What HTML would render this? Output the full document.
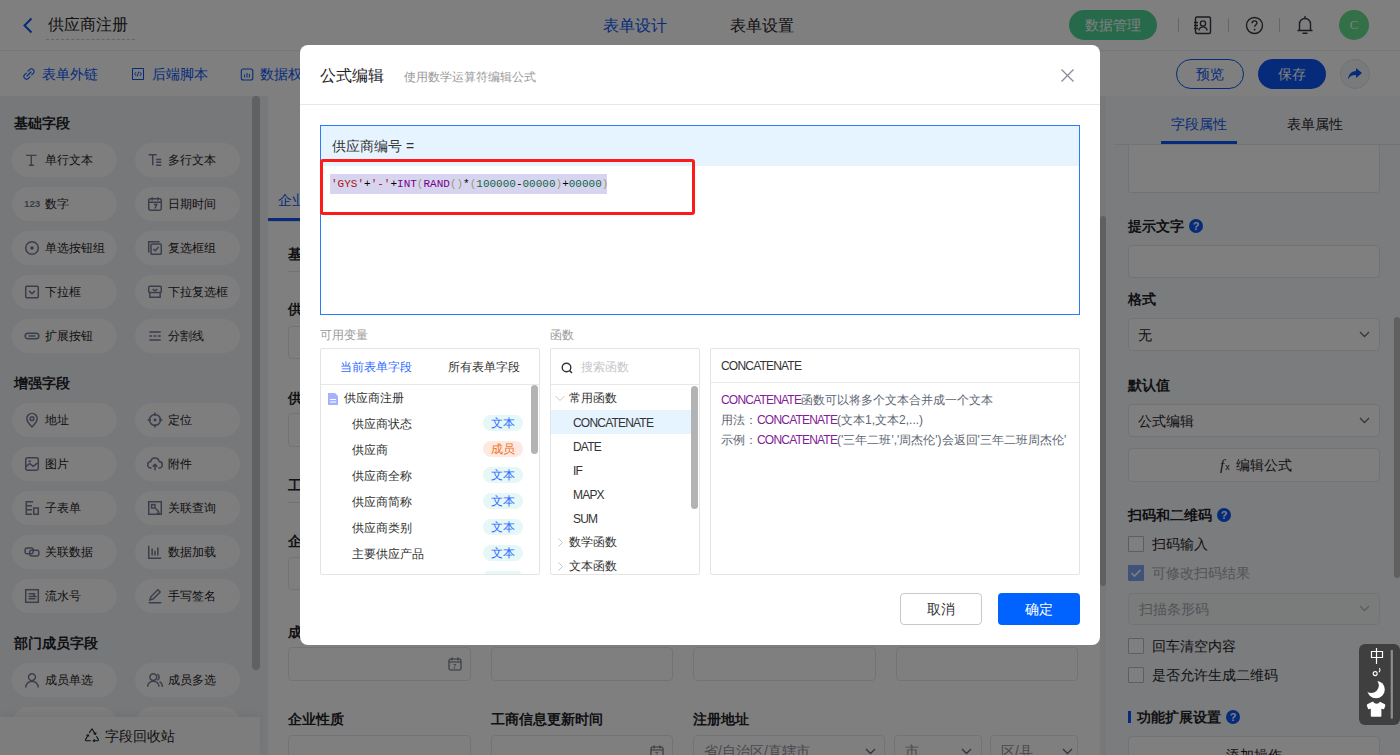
<!DOCTYPE html>
<html><head><meta charset="utf-8">
<style>
*{margin:0;padding:0;box-sizing:border-box}
html,body{width:1400px;height:755px;overflow:hidden;background:#fff;font-family:"Liberation Sans",sans-serif;color:#1f2329}
.a{position:absolute}
#hdr{left:0;top:0;width:1400px;height:51px;background:#fff;border-bottom:1px solid #ebedf0}
#tb{left:0;top:51px;width:1400px;height:45px;background:#fff}
#lp{left:0;top:96px;width:268px;height:659px;background:#eff1f5}
#cv{left:268px;top:96px;width:833px;height:659px;background:#fff}
#rp{left:1106px;top:96px;width:294px;height:659px;background:#f7f8fa}
#ov{left:0;top:0;width:1400px;height:755px;background:rgba(0,0,0,.5)}
#md{left:300px;top:45px;width:800px;height:600px;background:#fff;border-radius:8px}
.pill{position:absolute;width:105px;height:34px;border-radius:17px;background:#fcfcfd}
.pt{font-size:12px;line-height:18px;color:#1f2329}
.sh{font-size:14px;font-weight:bold;line-height:20px;color:#1f2329}
.lb{font-size:14px;font-weight:bold;line-height:20px;color:#1f2329;white-space:nowrap}
.ip{border:1px solid #e5e6eb;border-radius:4px;background:#fff}
.hq{position:absolute;width:14px;height:14px;border-radius:7px;background:#0a57f5;color:#fff;font-size:11px;font-weight:bold;line-height:14px;text-align:center}
.cm{font-family:"Liberation Mono",monospace;font-size:11px;line-height:20px;color:#000;white-space:pre}
.cm .s{color:#a11}.cm .k{color:#708}.cm .b{color:#997}.cm .n{color:#164}
.bx{border:1px solid #e4e4e4;border-radius:2px;background:#fff}
.tg{width:40px;height:16px;border-radius:8px;font-size:12px;line-height:16px;text-align:center}
.fn{font-size:12px;line-height:18px;color:#333;letter-spacing:-.8px}
.ds{font-size:12px;line-height:20px;color:#5e6673;white-space:nowrap}.ds .p{color:#7f2196;letter-spacing:-.8px}
#ime{left:1359px;top:644px;width:41px;height:81px;border-radius:6px;background:#3f3f3f}
</style></head><body>
<div id="hdr" class="a">
<svg class="a" style="left:22px;top:17px" width="12" height="17" viewBox="0 0 12 17"><path d="M9.5 1.5L2.5 8.5l7 7" fill="none" stroke="#0a57f5" stroke-width="2"/></svg>
<div class="a" style="left:48px;top:14px;font-size:16px;line-height:22px;color:#1f2329">供应商注册</div>
<div class="a" style="left:46px;top:39px;width:89px;border-top:1px dashed #c8cad0"></div>
<div class="a" style="left:603px;top:15px;font-size:16px;line-height:22px;color:#0a57f5">表单设计</div>
<div class="a" style="left:730px;top:15px;font-size:16px;line-height:22px;color:#1f2329">表单设置</div>
<div class="a" style="left:1069px;top:10px;width:88px;height:30px;border-radius:15px;background:#4cd397;color:#fff;font-size:14px;line-height:30px;text-align:center">数据管理</div>
<div class="a" style="left:1178px;top:18px;width:1px;height:14px;background:#c9cdd4"></div>
<div class="a" style="left:1228px;top:18px;width:1px;height:14px;background:#c9cdd4"></div>
<div class="a" style="left:1279px;top:18px;width:1px;height:14px;background:#c9cdd4"></div>
<svg class="a" style="left:1192px;top:15px" width="22" height="21" viewBox="0 0 22 21"><rect x="3.5" y="2" width="15" height="16.5" rx="1.5" fill="none" stroke="#33373e" stroke-width="1.4"/><path d="M2 7.5h4M2 10.5h4M2 13.5h4" stroke="#33373e" stroke-width="1.4"/><circle cx="11" cy="8.5" r="2.6" fill="none" stroke="#33373e" stroke-width="1.35"/><path d="M6.8 15.5c.6-2.4 2.2-3.6 4.2-3.6s3.6 1.2 4.2 3.6" fill="none" stroke="#33373e" stroke-width="1.35"/></svg>
<svg class="a" style="left:1245px;top:16px" width="19" height="19" viewBox="0 0 19 19"><circle cx="9.5" cy="9.5" r="8" fill="none" stroke="#33373e" stroke-width="1.35"/><path d="M7 7.3c0-1.5 1.1-2.5 2.5-2.5s2.5 1 2.5 2.3c0 1.6-2.3 1.8-2.3 3.6" fill="none" stroke="#33373e" stroke-width="1.35"/><circle cx="9.6" cy="13.6" r=".95" fill="#33373e"/></svg>
<svg class="a" style="left:1296px;top:15px" width="18" height="20" viewBox="0 0 18 20"><path d="M9 1.5v1.5M3.5 15.5V9a5.5 5.5 0 0 1 11 0v6.5M2 15.5h14M7 18.3h4" fill="none" stroke="#33373e" stroke-width="1.4" stroke-linecap="round"/></svg>
<div class="a" style="left:1339px;top:10px;width:30px;height:30px;border-radius:15px;background:#66e08f;color:#fff;font-family:'Liberation Serif',serif;font-size:12.5px;line-height:31px;text-align:center">C</div>
</div>
<div id="tb" class="a">
<svg class="a" style="left:22px;top:16px" width="14" height="14" viewBox="0 0 14 14"><path d="M6 4.2l1.6-1.6a2.6 2.6 0 0 1 3.7 3.7L9.7 7.9M8 9.8l-1.6 1.6a2.6 2.6 0 0 1-3.7-3.7L4.3 6.1M5 9l4-4" fill="none" stroke="#0a57f5" stroke-width="1.1" stroke-linecap="round"/></svg>
<div class="a" style="left:42px;top:13px;font-size:14px;line-height:20px;color:#0a57f5">表单外链</div>
<svg class="a" style="left:131px;top:16px" width="14" height="14" viewBox="0 0 14 14"><rect x="1.5" y="1.5" width="11" height="11" rx=".5" fill="none" stroke="#0a57f5" stroke-width="1.05"/><path d="M5.2 5L3.6 7l1.6 2M8.8 5l1.6 2-1.6 2M7.8 4.6L6.2 9.4" fill="none" stroke="#0a57f5" stroke-width=".9"/></svg>
<div class="a" style="left:152px;top:13px;font-size:14px;line-height:20px;color:#0a57f5">后端脚本</div>
<svg class="a" style="left:240px;top:17px" width="14" height="14" viewBox="0 0 14 14"><rect x="1.3" y="1" width="11.5" height="11" rx="2" fill="none" stroke="#0a57f5" stroke-width="1.1"/><path d="M4.6 9.5V6.5M7 9.5V5M9.4 9.5V6" stroke="#0a57f5" stroke-width="1"/></svg>
<div class="a" style="left:260px;top:13px;font-size:14px;line-height:20px;color:#0a57f5">数据权限</div>
<div class="a" style="left:1176px;top:8px;width:68px;height:30px;border-radius:15px;border:1px solid #0a57f5;color:#0a57f5;font-size:14px;line-height:28px;text-align:center">预览</div>
<div class="a" style="left:1258px;top:8px;width:68px;height:30px;border-radius:15px;background:#0a57f5;color:#fff;font-size:14px;line-height:30px;text-align:center">保存</div>
<div class="a" style="left:1340px;top:8px;width:30px;height:30px;border-radius:15px;border:1px solid #dfe3ea;background:#f3f5f9"></div>
<svg class="a" style="left:1347px;top:16px" width="16" height="14" viewBox="0 0 16 14"><path d="M9 1l6 5-6 5V8C5 8 2.5 9.3 1 12.5 1.5 7.5 4 4.5 9 4z" fill="#0a57f5"/></svg>
</div>
<div id="lp" class="a"><div class="a sh" style="left:14px;top:17px">基础字段</div><div class="pill" style="left:12px;top:47px"></div><svg class="a" style="left:24px;top:56px" width="16" height="16" viewBox="0 0 14 14"><path d="M1.8 3h9.2M6.4 3v8.6M4.3 11.6h4.4" stroke="#737d95" fill="none" stroke-width="1.2"/></svg><div class="a pt" style="left:45px;top:55px">单行文本</div><div class="pill" style="left:135px;top:47px"></div><svg class="a" style="left:147px;top:56px" width="16" height="16" viewBox="0 0 14 14"><path d="M1.5 2.5h7M5 2.5v9M8 6.5h4.5M8 9h4.5M8 11.5h4.5" stroke="#737d95" fill="none" stroke-width="1.3"/></svg><div class="a pt" style="left:168px;top:55px">多行文本</div><div class="pill" style="left:12px;top:91px"></div><svg class="a" style="left:24px;top:100px" width="16" height="16" viewBox="0 0 14 14"><text x="0" y="9.6" font-size="8.5" font-weight="bold" fill="#737d95" font-family="Liberation Sans">123</text></svg><div class="a pt" style="left:45px;top:99px">数字</div><div class="pill" style="left:135px;top:91px"></div><svg class="a" style="left:147px;top:100px" width="16" height="16" viewBox="0 0 14 14"><rect x="1.5" y="2.5" width="11" height="10" rx="1.5" stroke="#737d95" fill="none" stroke-width="1.3"/><path d="M4.5 1v3M9.5 1v3M1.5 5.5h11M6 7.5h2.5l-1.5 3.5" stroke="#737d95" fill="none" stroke-width="1.3"/></svg><div class="a pt" style="left:168px;top:99px">日期时间</div><div class="pill" style="left:12px;top:135px"></div><svg class="a" style="left:24px;top:144px" width="16" height="16" viewBox="0 0 14 14"><circle cx="7" cy="7" r="5.5" stroke="#737d95" fill="none" stroke-width="1.3"/><circle cx="7" cy="7" r="1.6" fill="#737d95"/></svg><div class="a pt" style="left:45px;top:143px">单选按钮组</div><div class="pill" style="left:135px;top:135px"></div><svg class="a" style="left:147px;top:144px" width="16" height="16" viewBox="0 0 14 14"><path d="M1.5 11V1.5H11" stroke="#737d95" fill="none" stroke-width="1.3"/><rect x="3.5" y="3.5" width="9" height="9" rx="1" stroke="#737d95" fill="none" stroke-width="1.3"/><path d="M5.6 7.8l1.6 1.6 3-3.3" stroke="#737d95" fill="none" stroke-width="1.3"/></svg><div class="a pt" style="left:168px;top:143px">复选框组</div><div class="pill" style="left:12px;top:179px"></div><svg class="a" style="left:24px;top:188px" width="16" height="16" viewBox="0 0 14 14"><rect x="1.5" y="2" width="11" height="10" rx="1" stroke="#737d95" fill="none" stroke-width="1.3"/><path d="M4.5 6l2.5 2.5 2.5-2.5" stroke="#737d95" fill="none" stroke-width="1.3"/></svg><div class="a pt" style="left:45px;top:187px">下拉框</div><div class="pill" style="left:135px;top:179px"></div><svg class="a" style="left:147px;top:188px" width="16" height="16" viewBox="0 0 14 14"><rect x="1.5" y="2" width="11" height="5.5" rx="1" stroke="#737d95" fill="none" stroke-width="1.3"/><path d="M2.5 7.5v4h9v-4M5 4.5l2 1.5 2-1.5" stroke="#737d95" fill="none" stroke-width="1.3"/></svg><div class="a pt" style="left:168px;top:187px">下拉复选框</div><div class="pill" style="left:12px;top:223px"></div><svg class="a" style="left:24px;top:232px" width="16" height="16" viewBox="0 0 14 14"><rect x="1" y="4.5" width="12" height="5" rx="2.5" stroke="#737d95" fill="none" stroke-width="1.3"/><path d="M4 7h6" stroke="#737d95" fill="none" stroke-width="1.3"/></svg><div class="a pt" style="left:45px;top:231px">扩展按钮</div><div class="pill" style="left:135px;top:223px"></div><svg class="a" style="left:147px;top:232px" width="16" height="16" viewBox="0 0 14 14"><path d="M2 3.5h10M2 7h2.5M5.8 7h2.5M9.5 7h2.5M2 10.5h10" stroke="#737d95" fill="none" stroke-width="1.3"/></svg><div class="a pt" style="left:168px;top:231px">分割线</div><div class="a sh" style="left:14px;top:277px">增强字段</div><div class="pill" style="left:12px;top:307px"></div><svg class="a" style="left:24px;top:316px" width="16" height="16" viewBox="0 0 14 14"><path d="M7 13s-4.5-4.2-4.5-7.3a4.5 4.5 0 0 1 9 0C11.5 8.8 7 13 7 13z" stroke="#737d95" fill="none" stroke-width="1.3"/><circle cx="7" cy="5.8" r="1.6" stroke="#737d95" fill="none" stroke-width="1.3"/></svg><div class="a pt" style="left:45px;top:315px">地址</div><div class="pill" style="left:135px;top:307px"></div><svg class="a" style="left:147px;top:316px" width="16" height="16" viewBox="0 0 14 14"><circle cx="7" cy="7" r="4.8" stroke="#737d95" fill="none" stroke-width="1.3"/><circle cx="7" cy="7" r="1.3" fill="#737d95"/><path d="M7 .5v3M7 10.5v3M.5 7h3M10.5 7h3" stroke="#737d95" fill="none" stroke-width="1.3"/></svg><div class="a pt" style="left:168px;top:315px">定位</div><div class="pill" style="left:12px;top:351px"></div><svg class="a" style="left:24px;top:360px" width="16" height="16" viewBox="0 0 14 14"><rect x="1.5" y="1.5" width="11" height="11" rx="1.5" stroke="#737d95" fill="none" stroke-width="1.3"/><path d="M1.5 9.5l3.5-3 3 2.5 4-3M4 4.5h2" stroke="#737d95" fill="none" stroke-width="1.3"/></svg><div class="a pt" style="left:45px;top:359px">图片</div><div class="pill" style="left:135px;top:351px"></div><svg class="a" style="left:147px;top:360px" width="16" height="16" viewBox="0 0 14 14"><path d="M4 10.5H3.5a2.8 2.8 0 0 1-.3-5.6 3.8 3.8 0 0 1 7.5 0 2.8 2.8 0 0 1-.2 5.6H10M7 12.5V7.5M5 9.3l2-2 2 2" stroke="#737d95" fill="none" stroke-width="1.3"/></svg><div class="a pt" style="left:168px;top:359px">附件</div><div class="pill" style="left:12px;top:395px"></div><svg class="a" style="left:24px;top:404px" width="16" height="16" viewBox="0 0 14 14"><path d="M8 1.5H2v11h5M2 5h5M2 8.5h5" stroke="#737d95" fill="none" stroke-width="1.3"/><rect x="8.5" y="7" width="4" height="5.5" stroke="#737d95" fill="none" stroke-width="1.3"/></svg><div class="a pt" style="left:45px;top:403px">子表单</div><div class="pill" style="left:135px;top:395px"></div><svg class="a" style="left:147px;top:404px" width="16" height="16" viewBox="0 0 14 14"><rect x="1.5" y="1.5" width="11" height="11" stroke="#737d95" fill="none" stroke-width="1.3"/><rect x="4" y="4" width="3" height="3" stroke="#737d95" fill="none" stroke-width="1.3"/><path d="M7.5 7.5l3 3M8.5 11.5h3" stroke="#737d95" fill="none" stroke-width="1.3"/></svg><div class="a pt" style="left:168px;top:403px">关联查询</div><div class="pill" style="left:12px;top:439px"></div><svg class="a" style="left:24px;top:448px" width="16" height="16" viewBox="0 0 14 14"><rect x="1" y="3.5" width="7" height="5" rx="1.5" stroke="#737d95" fill="none" stroke-width="1.3"/><rect x="5" y="5.5" width="8" height="5" rx="1.5" stroke="#737d95" fill="none" stroke-width="1.3"/></svg><div class="a pt" style="left:45px;top:447px">关联数据</div><div class="pill" style="left:135px;top:439px"></div><svg class="a" style="left:147px;top:448px" width="16" height="16" viewBox="0 0 14 14"><path d="M1.5 1.5v11h11M4.5 4v6M7 6v4M9.5 3v7" stroke="#737d95" fill="none" stroke-width="1.3"/></svg><div class="a pt" style="left:168px;top:447px">数据加载</div><div class="pill" style="left:12px;top:483px"></div><svg class="a" style="left:24px;top:492px" width="16" height="16" viewBox="0 0 14 14"><rect x="1.5" y="1.5" width="11" height="11" stroke="#737d95" fill="none" stroke-width="1.3"/><path d="M4 5h6M4 7.5h6l-2-1.5M10 9.5H4" stroke="#737d95" fill="none" stroke-width="1.3"/></svg><div class="a pt" style="left:45px;top:491px">流水号</div><div class="pill" style="left:135px;top:483px"></div><svg class="a" style="left:147px;top:492px" width="16" height="16" viewBox="0 0 14 14"><path d="M2.5 10.5l1-3 6-6 2 2-6 6zM1.5 13h11" stroke="#737d95" fill="none" stroke-width="1.3"/></svg><div class="a pt" style="left:168px;top:491px">手写签名</div><div class="a sh" style="left:14px;top:537px">部门成员字段</div><div class="pill" style="left:12px;top:567px"></div><svg class="a" style="left:24px;top:576px" width="16" height="16" viewBox="0 0 14 14"><circle cx="7" cy="4.5" r="3" stroke="#737d95" fill="none" stroke-width="1.3"/><path d="M1.5 13.5a5.5 5.5 0 0 1 11 0" stroke="#737d95" fill="none" stroke-width="1.3"/></svg><div class="a pt" style="left:45px;top:575px">成员单选</div><div class="pill" style="left:135px;top:567px"></div><svg class="a" style="left:147px;top:576px" width="16" height="16" viewBox="0 0 14 14"><circle cx="5.5" cy="4.5" r="3" stroke="#737d95" fill="none" stroke-width="1.3"/><path d="M.5 13a5 5 0 0 1 10 0M9 1.8a3 3 0 0 1 0 5.4M11 8.5a5 5 0 0 1 2.5 4.5" stroke="#737d95" fill="none" stroke-width="1.3"/></svg><div class="a pt" style="left:168px;top:575px">成员多选</div><div class="pill" style="left:12px;top:611px"></div><div class="pill" style="left:135px;top:611px"></div><div class="a" style="left:252px;top:0;width:8px;height:574px;border-radius:4px;background:#bfc2c7"></div><div class="a" style="left:0;top:621px;width:260px;height:38px;background:#fbfbfc;box-shadow:0 -3px 8px rgba(0,0,0,.06)"></div><svg class="a" style="left:84px;top:632px" width="16" height="14" viewBox="0 0 16 14"><path d="M5.3 4.9L8 .8l3.1 5.1M12.4 8.2l2.1 3.6-.6.9H9.3M6.8 12.7H2l-.6-.9 2.5-4.3" fill="none" stroke="#1f2329" stroke-width="1.1" stroke-linejoin="round"/><path d="M9.6 5.6l2 .9.4-2.2M10.8 11.4l-1.6 1.3 1.6 1.2M2.4 7.6l1.7-.9 1 1.9" fill="none" stroke="#1f2329" stroke-width="1.1" stroke-linejoin="round"/></svg><div class="a" style="left:105px;top:630px;font-size:14px;line-height:20px;color:#1f2329">字段回收站</div></div>
<div id="cv" class="a"><div class="a" style="left:10px;top:94px;font-size:14px;line-height:20px;color:#0a57f5">企业信息</div><div class="a" style="left:0px;top:122px;width:80px;height:3px;background:#0a57f5"></div><div class="a" style="left:0px;top:125px;width:832px;height:1px;background:#e5e6eb"></div><div class="a lb" style="left:20px;top:148px">基本信息</div><div class="a" style="left:20px;top:175px;width:790px;height:1px;background:#e5e6eb"></div><div class="a lb" style="left:20px;top:203px">供应商编号</div><div class="a ip" style="left:20px;top:230px;width:790px;height:33px"></div><div class="a lb" style="left:20px;top:292px">供应商名称</div><div class="a ip" style="left:20px;top:317px;width:790px;height:34px"></div><div class="a lb" style="left:20px;top:379px">工商信息</div><div class="a" style="left:20px;top:406px;width:790px;height:1px;background:#e5e6eb"></div><div class="a lb" style="left:20px;top:435px">企业名称</div><div class="a ip" style="left:20px;top:461px;width:790px;height:33px"></div><div class="a lb" style="left:20px;top:526px">成立日期</div><div class="a lb" style="left:223px;top:526px">注册资本</div><div class="a lb" style="left:425px;top:526px">法定代表人</div><div class="a lb" style="left:628px;top:526px">统一社会信用代码</div><div class="a ip" style="left:20px;top:551px;width:183px;height:34px"></div><div class="a ip" style="left:223px;top:551px;width:182px;height:34px"></div><div class="a ip" style="left:425px;top:551px;width:183px;height:34px"></div><div class="a ip" style="left:628px;top:551px;width:182px;height:34px"></div><svg class="a" style="left:180px;top:561px" width="14" height="14" viewBox="0 0 14 14"><rect x="1" y="2" width="12" height="11" rx="1.5" fill="none" stroke="#646a73" stroke-width="1.1"/><path d="M4 .5v3M10 .5v3M1 5h12" stroke="#646a73" stroke-width="1.1"/><text x="4.6" y="11.8" font-size="7" fill="#646a73" font-family="Liberation Sans">7</text></svg><div class="a lb" style="left:20px;top:613px">企业性质</div><div class="a lb" style="left:223px;top:613px">工商信息更新时间</div><div class="a lb" style="left:425px;top:613px">注册地址</div><div class="a ip" style="left:20px;top:639px;width:183px;height:40px"></div><div class="a ip" style="left:223px;top:639px;width:182px;height:40px"></div><div class="a ip" style="left:425px;top:639px;width:192px;height:40px"></div><div class="a ip" style="left:626px;top:639px;width:88px;height:40px"></div><div class="a ip" style="left:722px;top:639px;width:88px;height:40px"></div><svg class="a" style="left:382px;top:649px" width="14" height="14" viewBox="0 0 14 14"><rect x="1" y="2" width="12" height="11" rx="1.5" fill="none" stroke="#646a73" stroke-width="1.1"/><path d="M4 .5v3M10 .5v3M1 5h12" stroke="#646a73" stroke-width="1.1"/><text x="4.6" y="11.8" font-size="7" fill="#646a73" font-family="Liberation Sans">7</text></svg><div class="a" style="left:436px;top:645px;font-size:14px;line-height:20px;color:#8f959e">省/自治区/直辖市</div><div class="a" style="left:637px;top:645px;font-size:14px;line-height:20px;color:#8f959e">市</div><div class="a" style="left:733px;top:645px;font-size:14px;line-height:20px;color:#8f959e">区/县</div><svg class="a" style="left:597px;top:652px" width="11" height="7" viewBox="0 0 11 7"><path d="M1 1l4.5 4.5L10 1" fill="none" stroke="#646a73" stroke-width="1.3"/></svg><svg class="a" style="left:693px;top:652px" width="11" height="7" viewBox="0 0 11 7"><path d="M1 1l4.5 4.5L10 1" fill="none" stroke="#646a73" stroke-width="1.3"/></svg><svg class="a" style="left:794px;top:652px" width="11" height="7" viewBox="0 0 11 7"><path d="M1 1l4.5 4.5L10 1" fill="none" stroke="#646a73" stroke-width="1.3"/></svg></div><div class="a" style="left:1100px;top:96px;width:6px;height:659px;background:#f1f1f1"></div><div class="a" style="left:1100px;top:216px;width:6px;height:370px;border-radius:3px;background:#c1c1c1"></div>
<div id="rp" class="a"><div class="a" style="left:65px;top:18px;font-size:14px;line-height:20px;color:#0a57f5">字段属性</div><div class="a" style="left:181px;top:18px;font-size:14px;line-height:20px;color:#1f2329">表单属性</div><div class="a" style="left:55px;top:45px;width:76px;height:3px;background:#0a57f5"></div><div class="a" style="left:8px;top:48px;width:286px;height:1px;background:#e5e6eb"></div><div class="a ip" style="left:22px;top:49px;width:252px;height:48px;border-top:none;border-radius:0 0 4px 4px"></div><div class="a lb" style="left:22px;top:120px">提示文字</div><div class="a hq" style="left:83px;top:123px">?</div><div class="a ip" style="left:22px;top:149px;width:252px;height:33px"></div><div class="a lb" style="left:22px;top:193px">格式</div><div class="a ip" style="left:22px;top:222px;width:252px;height:33px"></div><div class="a" style="left:32px;top:229px;font-size:14px;line-height:20px;color:#1f2329">无</div><div class="a lb" style="left:22px;top:279px">默认值</div><div class="a ip" style="left:22px;top:308px;width:252px;height:33px"></div><div class="a" style="left:32px;top:315px;font-size:14px;line-height:20px;color:#1f2329">公式编辑</div><div class="a ip" style="left:22px;top:352px;width:252px;height:34px"></div><div class="a" style="left:114px;top:359px;font-size:14px;line-height:20px;color:#1f2329"><i style="font-family:'Liberation Serif',serif;font-size:15px;margin-right:1px">f</i><span style="font-size:9px;margin-right:6px">x</span>编辑公式</div><svg class="a" style="left:253px;top:235px" width="11" height="7" viewBox="0 0 11 7"><path d="M1 1l4.5 4.5L10 1" fill="none" stroke="#646a73" stroke-width="1.3"/></svg><svg class="a" style="left:253px;top:321px" width="11" height="7" viewBox="0 0 11 7"><path d="M1 1l4.5 4.5L10 1" fill="none" stroke="#646a73" stroke-width="1.3"/></svg><div class="a lb" style="left:22px;top:409px">扫码和二维码</div><div class="a hq" style="left:111px;top:412px">?</div><div class="a" style="left:22px;top:440px;width:16px;height:16px;border-radius:1px;border:1px solid #b9bdc6;background:#fff"></div><div class="a" style="left:46px;top:438px;font-size:14px;line-height:20px;color:#1f2329">扫码输入</div><div class="a" style="left:22px;top:469px;width:16px;height:16px;border-radius:1px;background:#7fa6f5"></div><svg class="a" style="left:22px;top:469px" width="16" height="16" viewBox="0 0 16 16"><path d="M3.5 8l3 3 6-6" fill="none" stroke="#fff" stroke-width="1.6"/></svg><div class="a" style="left:46px;top:467px;font-size:14px;line-height:20px;color:#a3a8b0">可修改扫码结果</div><div class="a ip" style="left:22px;top:497px;width:252px;height:32px;background:#f5f6f7"></div><div class="a" style="left:33px;top:503px;font-size:14px;line-height:20px;color:#a3a8b0">扫描条形码</div><svg class="a" style="left:253px;top:509px" width="11" height="7" viewBox="0 0 11 7"><path d="M1 1l4.5 4.5L10 1" fill="none" stroke="#b4b8bf" stroke-width="1.3"/></svg><div class="a" style="left:22px;top:542px;width:16px;height:16px;border-radius:1px;border:1px solid #b9bdc6;background:#fff"></div><div class="a" style="left:46px;top:540px;font-size:14px;line-height:20px;color:#1f2329">回车清空内容</div><div class="a" style="left:22px;top:571px;width:16px;height:16px;border-radius:1px;border:1px solid #b9bdc6;background:#fff"></div><div class="a" style="left:46px;top:569px;font-size:14px;line-height:20px;color:#1f2329">是否允许生成二维码</div><div class="a" style="left:22px;top:615px;width:3px;height:12px;background:#0a57f5"></div><div class="a lb" style="left:31px;top:611px">功能扩展设置</div><div class="a hq" style="left:120px;top:614px">?</div><div class="a ip" style="left:22px;top:640px;width:252px;height:40px"></div><div class="a" style="left:120px;top:649px;font-size:14px;line-height:20px;color:#1f2329">添加操作</div><div class="a" style="left:288px;top:221px;width:6px;height:261px;border-radius:3px;background:#c1c1c1"></div></div>
<div id="ov" class="a"></div>
<div id="md" class="a"><div class="a" style="left:20px;top:20px;font-size:16px;line-height:22px;color:#1f2329">公式编辑</div><div class="a" style="left:104px;top:23px;font-size:12px;line-height:18px;color:#999">使用数学运算符编辑公式</div><svg class="a" style="left:760px;top:23px" width="15" height="15" viewBox="0 0 15 15"><path d="M1.5 1.5l12 12M13.5 1.5l-12 12" stroke="#8a8f99" stroke-width="1.4"/></svg><div class="a" style="left:0;top:59px;width:800px;height:1px;background:#e8e8e8"></div><div class="a" style="left:20px;top:80px;width:760px;height:190px;border:1px solid #2b7bff;background:#fff"></div><div class="a" style="left:21px;top:81px;width:758px;height:40px;background:#e6f4ff"></div><div class="a" style="left:32px;top:91px;font-size:14px;line-height:20px;color:#333">供应商编号 =</div><div class="a" style="left:30px;top:129px;width:277px;height:20px;background:#d7d4f0"></div><div class="a cm" style="left:31px;top:129px"><span class="s">'GYS'</span>+<span class="s">'-'</span>+<span class="k">INT</span><span class="b">(</span><span class="k">RAND</span><span class="b">()</span>*<span class="b">(</span><span class="n">100000</span>-<span class="n">00000</span><span class="b">)</span>+<span class="n">00000</span><span class="b">)</span></div><div class="a" style="left:20px;top:114px;width:375px;height:56px;border:3px solid #ff1a1a;border-radius:3px"></div><div class="a" style="left:20px;top:281px;font-size:12px;line-height:18px;color:#999">可用变量</div><div class="a" style="left:250px;top:281px;font-size:12px;line-height:18px;color:#999">函数</div><div class="a bx" style="left:20px;top:303px;width:220px;height:227px"></div><div class="a" style="left:40px;top:313px;font-size:12px;line-height:18px;color:#2f6bff">当前表单字段</div><div class="a" style="left:148px;top:313px;font-size:12px;line-height:18px;color:#333">所有表单字段</div><div class="a" style="left:21px;top:339px;width:218px;height:1px;background:#e8e8e8"></div><svg class="a" style="left:27px;top:348px" width="12" height="12" viewBox="0 0 12 12"><path d="M1 0h7l3 3v9H1z" fill="#a3b1ff"/><path d="M3 6.5h6M3 9h6" stroke="#fff" stroke-width="1.2"/></svg><div class="a" style="left:44px;top:344px;font-size:12px;line-height:18px;color:#333">供应商注册</div><div class="a" style="left:52px;top:370px;font-size:12px;line-height:18px;color:#333">供应商状态</div><div class="a tg" style="left:183px;top:370px;background:#e6f7f7;color:#2f6bff">文本</div><div class="a" style="left:52px;top:396px;font-size:12px;line-height:18px;color:#333">供应商</div><div class="a tg" style="left:183px;top:396px;background:#fde9df;color:#f07227">成员</div><div class="a" style="left:52px;top:422px;font-size:12px;line-height:18px;color:#333">供应商全称</div><div class="a tg" style="left:183px;top:422px;background:#e6f7f7;color:#2f6bff">文本</div><div class="a" style="left:52px;top:448px;font-size:12px;line-height:18px;color:#333">供应商简称</div><div class="a tg" style="left:183px;top:448px;background:#e6f7f7;color:#2f6bff">文本</div><div class="a" style="left:52px;top:474px;font-size:12px;line-height:18px;color:#333">供应商类别</div><div class="a tg" style="left:183px;top:474px;background:#e6f7f7;color:#2f6bff">文本</div><div class="a" style="left:52px;top:500px;font-size:12px;line-height:18px;color:#333">主要供应产品</div><div class="a tg" style="left:183px;top:500px;background:#e6f7f7;color:#2f6bff">文本</div><div class="a" style="left:185px;top:526px;width:36px;height:3px;border-radius:3px 3px 0 0;background:#e6f7f7"></div><div class="a" style="left:231px;top:340px;width:7px;height:69px;border-radius:4px;background:#b3b3b3"></div><div class="a bx" style="left:250px;top:303px;width:150px;height:227px"></div><svg class="a" style="left:261px;top:317px" width="12" height="12" viewBox="0 0 12 12"><circle cx="5.5" cy="5.5" r="4.3" fill="none" stroke="#333" stroke-width="1.4"/><path d="M8.5 8.5l2.5 2.5" stroke="#333" stroke-width="1.5"/></svg><div class="a" style="left:281px;top:313px;font-size:12px;line-height:18px;color:#c4c7cc">搜索函数</div><div class="a" style="left:251px;top:339px;width:148px;height:1px;background:#e8e8e8"></div><svg class="a" style="left:255px;top:350px" width="10" height="7" viewBox="0 0 10 7"><path d="M.5 1l4.5 4.5L9.5 1" fill="none" stroke="#c4c7cc" stroke-width="1"/></svg><div class="a" style="left:269px;top:344px;font-size:12px;line-height:18px;color:#333">常用函数</div><div class="a" style="left:251px;top:365px;width:140px;height:24px;background:#e6f4ff"></div><div class="a fn" style="left:273px;top:369px">CONCATENATE</div><div class="a fn" style="left:273px;top:393px">DATE</div><div class="a fn" style="left:273px;top:417px">IF</div><div class="a fn" style="left:273px;top:441px">MAPX</div><div class="a fn" style="left:273px;top:465px">SUM</div><svg class="a" style="left:258px;top:493px" width="5" height="9" viewBox="0 0 5 9"><path d="M.5 .5l4 4-4 4" fill="none" stroke="#c4c7cc" stroke-width="1"/></svg><div class="a" style="left:269px;top:488px;font-size:12px;line-height:18px;color:#333">数学函数</div><svg class="a" style="left:258px;top:517px" width="5" height="9" viewBox="0 0 5 9"><path d="M.5 .5l4 4-4 4" fill="none" stroke="#c4c7cc" stroke-width="1"/></svg><div class="a" style="left:269px;top:512px;font-size:12px;line-height:18px;color:#333">文本函数</div><div class="a" style="left:391px;top:341px;width:7px;height:123px;border-radius:4px;background:#b3b3b3"></div><div class="a bx" style="left:410px;top:303px;width:370px;height:227px"></div><div class="a fn" style="left:421px;top:312px;color:#333">CONCATENATE</div><div class="a" style="left:411px;top:337px;width:368px;height:1px;background:#e8e8e8"></div><div class="a ds" style="left:421px;top:345px"><span class="p">CONCATENATE</span>函数可以将多个文本合并成一个文本<br>用法：<span class="p">CONCATENATE</span>(文本1,文本2,...)<br>示例：<span class="p">CONCATENATE</span>('三年二班','周杰伦')会返回'三年二班周杰伦'</div><div class="a" style="left:600px;top:548px;width:82px;height:32px;border:1px solid #c9c9c9;border-radius:4px;font-size:14px;line-height:30px;text-align:center;color:#333">取消</div><div class="a" style="left:698px;top:548px;width:82px;height:32px;border-radius:4px;background:#0062ff;font-size:14px;line-height:32px;text-align:center;color:#fff">确定</div></div>
<div id="ime" class="a"><svg class="a" style="left:0;top:0" width="41" height="81" viewBox="1359 644 41 81">
<path d="M1371.5 651.5h11v6h-11zM1376.5 648v16" fill="none" stroke="#fff" stroke-width="1.2"/>
<circle cx="1375.2" cy="673.6" r="2" fill="none" stroke="#fff" stroke-width="1.1"/>
<path d="M1379 668.3c1.2.3 1.4 2.2 0 3.8" fill="none" stroke="#fff" stroke-width="1.1"/>
<circle cx="1376" cy="689.5" r="8.8" fill="#fff"/><circle cx="1371.3" cy="685.3" r="7.6" fill="#3f3f3f"/>
<path d="M1372.3 701.8l-4.5 2.2c-.8.4-1.1 1.2-.8 2l1.2 3.3 2.6-.6v7.3c0 .5.4.8.8.8h9c.5 0 .8-.3.8-.8v-7.3l2.6.6 1.2-3.3c.3-.8 0-1.6-.8-2l-4.5-2.2c-.6 1.3-1.8 2-3.3 2s-2.7-.7-3.3-2z" fill="#fff"/>
<rect x="1390.7" y="650" width="2.2" height="68.6" fill="#8d8d8d"/>
</svg></div>
</body></html>
